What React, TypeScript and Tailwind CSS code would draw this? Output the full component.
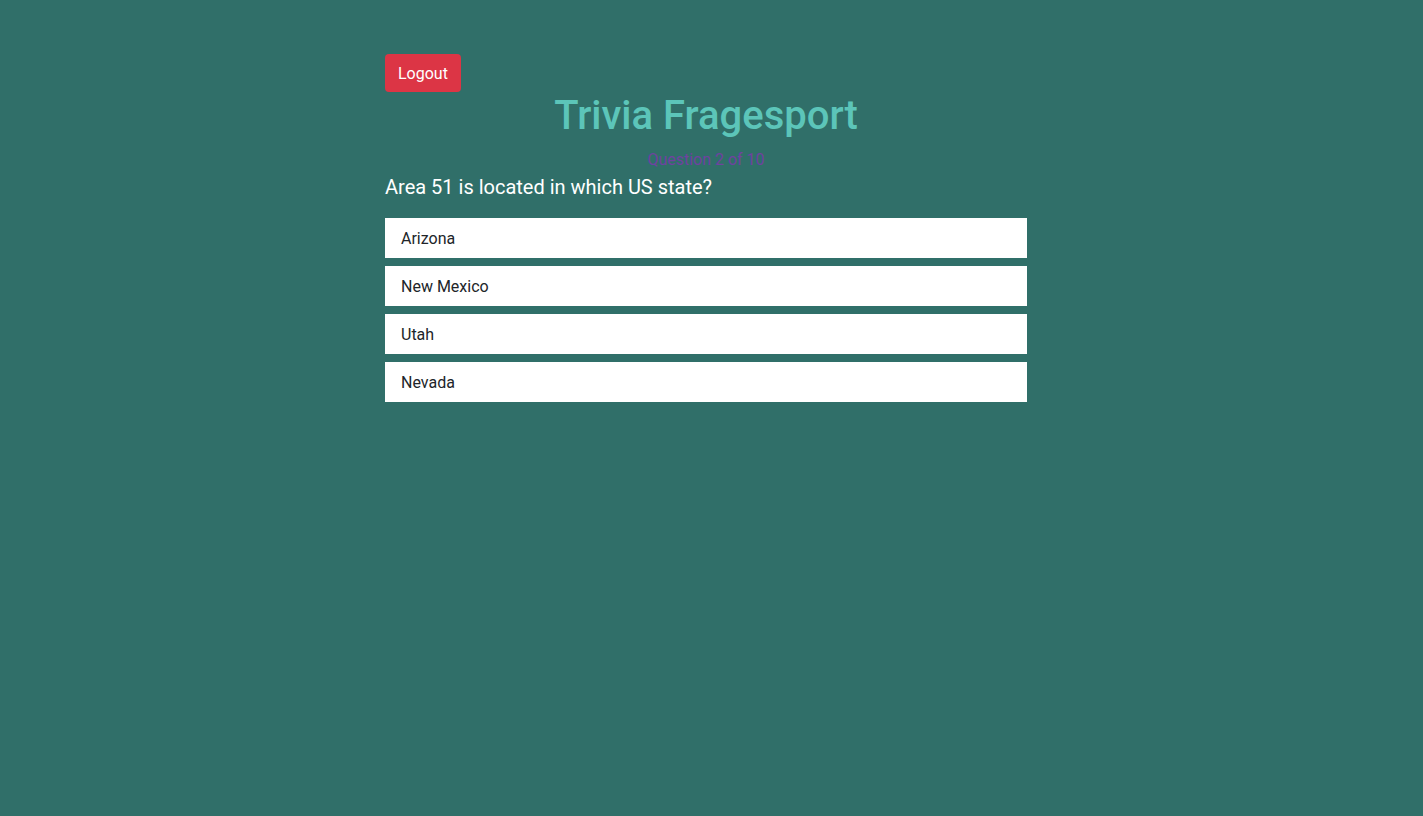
const answers = ['Arizona', 'New Mexico', 'Utah', 'Nevada']

const App = () => {
  return (
    <main className="min-h-screen w-full bg-[#306f69] font-['Roboto',sans-serif]">
      <div className="ml-[385px] w-[642px] pt-[54px]">
        <button className="h-[38px] rounded-[4px] bg-[#dc3545] px-[13px] pt-px text-base text-white">Logout</button>
        <h1 className="mb-2 text-center text-[40px] font-medium leading-[48px] text-[#5cc5b9]">Trivia Fragesport</h1>
        <p className="text-center text-base leading-6 text-[#6f42a0]">Question 2 of 10</p>
        <p className="text-xl leading-[30px] text-white">Area 51 is located in which US state?</p>
        <div className="mt-4 flex flex-col gap-2">
          {answers.map((a) => (
            <div key={a} className="flex h-10 items-center bg-white px-4 pt-px text-base text-[#212529]">
              {a}
            </div>
          ))}
        </div>
      </div>
    </main>
  )
}

export default App
